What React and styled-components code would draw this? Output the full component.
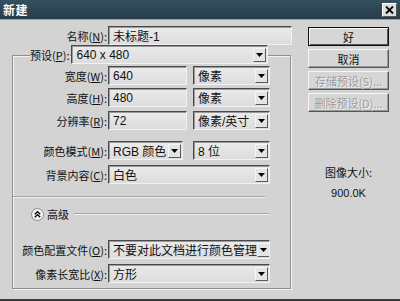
import React from "react";
import styled, { createGlobalStyle } from "styled-components";

const GlobalStyle = createGlobalStyle`
  html, body {
    margin: 0;
    padding: 0;
    background: #d3d3d3;
  }
  * {
    box-sizing: border-box;
  }
`;

const Window = styled.div`
  width: 400px;
  height: 301px;
  display: flex;
  flex-direction: column;
  background: #d3d3d3;
  font-family: "Noto Sans CJK SC", "Liberation Sans", sans-serif;
  font-size: 11px;
  color: #111;
  border-bottom: 2px solid #3a3a3a;
  overflow: hidden;
`;

const TitleBar = styled.div`
  height: 20px;
  flex: none;
  display: flex;
  align-items: center;
  justify-content: space-between;
  padding: 0 3px 0 3px;
  background: linear-gradient(#34505f, #263c4a);
  border-bottom: 1px solid #9aa2a8;
`;

const Title = styled.span`
  color: #fff;
  font-weight: bold;
  font-size: 12px;
  letter-spacing: 0.5px;
`;

const CloseButton = styled.div`
  width: 15px;
  height: 14px;
  display: flex;
  align-items: center;
  justify-content: center;
  background: #dcdcdc;
  border: 1px solid;
  border-color: #fff #555 #555 #fff;
`;

const Body = styled.div`
  flex: 1;
  display: flex;
`;

const LeftPane = styled.div`
  width: 292px;
  flex: none;
  padding: 6px 0 0 12px;
`;

const RightPane = styled.div`
  flex: 1;
  display: flex;
  flex-direction: column;
  align-items: flex-start;
  padding: 7px 0 0 16px;
`;

const Row = styled.div`
  display: flex;
  align-items: center;
  height: 19px;
  margin-top: ${(p) => p.$top || 0}px;
  padding-left: ${(p) => p.$indent || 0}px;
`;

const Label = styled.label`
  width: ${(p) => p.$w || 95}px;
  flex: none;
  text-align: right;
  padding-right: 1px;
  white-space: nowrap;
  u {
    text-decoration: underline;
  }
`;

const LegendLabel = styled.label`
  background: #d3d3d3;
  padding: 0 1px 0 0;
  white-space: nowrap;
  margin-right: 1px;
`;

const Field = styled.div`
  width: ${(p) => p.$w}px;
  height: 19px;
  flex: none;
  display: flex;
  align-items: center;
  padding-left: 4px;
  background: linear-gradient(#ebebeb, #dcdcdc);
  border: 1px solid;
  border-color: #4a4a4a #f2f2f2 #f2f2f2 #4a4a4a;
  box-shadow: inset 1px 1px 0 #9a9a9a;
  font-family: "Liberation Sans", "Noto Sans CJK SC", sans-serif;
  font-size: 12px;
  white-space: nowrap;
  overflow: hidden;
  margin-left: ${(p) => p.$gap || 0}px;
`;

const SelectBox = styled(Field)`
  justify-content: space-between;
  padding-right: 1px;
`;

const ArrowBtn = styled.span`
  width: 13px;
  height: 14px;
  flex: none;
  display: flex;
  align-items: center;
  justify-content: center;
  background: #e4e4e4;
  border: 1px solid;
  border-color: #f6f6f6 #5a5a5a #5a5a5a #f6f6f6;
`;

const Frame = styled.div`
  width: 279px;
  margin-top: 10px;
  border: 1px solid #8e8e8e;
  box-shadow: inset 1px 1px 0 #f4f4f4, 1px 1px 0 #f4f4f4;
  padding-bottom: 5px;
`;

const Etched = styled.div`
  height: 2px;
  width: ${(p) => p.$w}px;
  margin-top: ${(p) => p.$top || 0}px;
  border-top: 1px solid #a4a4a4;
  border-bottom: 1px solid #f2f2f2;
`;

const AdvancedRow = styled.div`
  display: flex;
  align-items: center;
  height: 14px;
  margin-top: 9px;
  padding-left: 18px;
  gap: 3px;
`;

const AdvancedLine = styled(Etched)`
  margin-left: 2px;
  flex: none;
`;

const Button = styled.div`
  width: 81px;
  height: 19px;
  margin-bottom: 3px;
  display: flex;
  align-items: center;
  justify-content: center;
  background: #d6d6d6;
  border: 1px solid;
  border-color: ${(p) => (p.$default ? "#111" : "#f6f6f6 #555 #555 #f6f6f6")};
  box-shadow: ${(p) =>
    p.$default ? "inset 1px 1px 0 #f6f6f6, inset -1px -1px 0 #555" : "inset -1px -1px 0 #9a9a9a"};
  color: ${(p) => (p.$disabled ? "#9c9c9c" : "#111")};
  text-shadow: ${(p) => (p.$disabled ? "1px 1px 0 #f2f2f2" : "none")};
  white-space: nowrap;
`;

const SizeInfo = styled.div`
  width: 81px;
  margin-top: 51px;
  display: flex;
  flex-direction: column;
  align-items: center;
  gap: 8px;
  line-height: 13px;
`;

const SizeValue = styled.span`
  font-family: "Liberation Sans", sans-serif;
  font-size: 11px;
`;

const Arrow = () => (
  <ArrowBtn>
    <svg width="7" height="4" viewBox="0 0 7 4">
      <path d="M0 0h7L3.5 4z" fill="#000" />
    </svg>
  </ArrowBtn>
);

const Select = ({ w, gap, children }) => (
  <SelectBox $w={w} $gap={gap}>
    <span>{children}</span>
    <Arrow />
  </SelectBox>
);

const CollapseIcon = () => (
  <svg width="13" height="13" viewBox="0 0 13 13">
    <circle cx="6.5" cy="6.5" r="6" fill="#f4f4f4" stroke="#8a8a8a" />
    <path d="M3.8 6.2L6.5 3.6L9.2 6.2M3.8 9.2L6.5 6.6L9.2 9.2" fill="none" stroke="#000" strokeWidth="1.4" />
  </svg>
);

export default function App() {
  return (
    <>
      <GlobalStyle />
      <Window>
        <TitleBar>
          <Title>新建</Title>
          <CloseButton>
            <svg width="9" height="8" viewBox="0 0 9 8">
              <path d="M1 0.5L8 7.5M8 0.5L1 7.5" stroke="#000" strokeWidth="1.8" />
            </svg>
          </CloseButton>
        </TitleBar>
        <Body>
          <LeftPane>
            <Row>
              <Label $w={96}>
                名称(<u>N</u>):
              </Label>
              <Field $w={184}>未标题-1</Field>
            </Row>
            <Frame>
              <Row $top={-11} $indent={17}>
                <LegendLabel>
                  预设(<u>P</u>):
                </LegendLabel>
                <Select w={197}>640 x 480</Select>
              </Row>
              <Row $top={2}>
                <Label>
                  宽度(<u>W</u>):
                </Label>
                <Field $w={79}>640</Field>
                <Select w={77} gap={6}>
                  像素
                </Select>
              </Row>
              <Row $top={3}>
                <Label>
                  高度(<u>H</u>):
                </Label>
                <Field $w={79}>480</Field>
                <Select w={77} gap={6}>
                  像素
                </Select>
              </Row>
              <Row $top={4}>
                <Label>
                  分辨率(<u>R</u>):
                </Label>
                <Field $w={79}>72</Field>
                <Select w={77} gap={6}>
                  像素/英寸
                </Select>
              </Row>
              <Row $top={11}>
                <Label>
                  颜色模式(<u>M</u>):
                </Label>
                <Select w={75}>RGB 颜色</Select>
                <Select w={77} gap={10}>
                  8 位
                </Select>
              </Row>
              <Row $top={5}>
                <Label>
                  背景内容(<u>C</u>):
                </Label>
                <Select w={162}>白色</Select>
              </Row>
              <Etched $w={252} $top={12} />
              <AdvancedRow>
                <CollapseIcon />
                <span>高级</span>
                <AdvancedLine $w={195} />
              </AdvancedRow>
              <Row $top={19}>
                <Label>
                  颜色配置文件(<u>O</u>):
                </Label>
                <Select w={162}>不要对此文档进行颜色管理</Select>
              </Row>
              <Row $top={5}>
                <Label>
                  像素长宽比(<u>X</u>):
                </Label>
                <Select w={162}>方形</Select>
              </Row>
            </Frame>
          </LeftPane>
          <RightPane>
            <Button $default>好</Button>
            <Button>取消</Button>
            <Button $disabled>存储预设(S)...</Button>
            <Button $disabled>删除预设(D)...</Button>
            <SizeInfo>
              <span>图像大小:</span>
              <SizeValue>900.0K</SizeValue>
            </SizeInfo>
          </RightPane>
        </Body>
      </Window>
    </>
  );
}
